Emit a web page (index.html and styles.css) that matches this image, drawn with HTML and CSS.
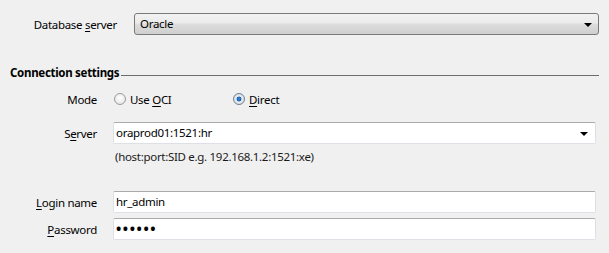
FILE: index.html
```html
<!DOCTYPE html>
<html>
<head>
<meta charset="utf-8">
<link rel="stylesheet" href="styles.css">
</head>
<body>
<div class="page">
  <div class="row-top">
    <div class="label-top">Database <u>s</u>erver</div>
    <div class="combo">
      <span class="combo-text">Oracle</span>
      <span class="arrow"></span>
    </div>
  </div>

  <div class="section-header">
    <span class="section-title">Connection settings</span>
    <span class="section-line"></span>
  </div>

  <div class="form">
    <div class="row mode-row">
      <div class="label">Mode</div>
      <div class="radios">
        <span class="radio-item first"><span class="radio"></span><span>Use <u>O</u>CI</span></span>
        <span class="radio-item"><span class="radio checked"></span><span><u>D</u>irect</span></span>
      </div>
    </div>
    <div class="row server-row">
      <div class="label">S<u>e</u>rver</div>
      <div class="field combo-edit">
        <span class="field-text">oraprod01:1521:hr</span>
        <span class="arrow"></span>
      </div>
    </div>
    <div class="hint-row">
      <div class="hint">(host:port:SID e.g. 192.168.1.2:1521:xe)</div>
    </div>
    <div class="row login-row">
      <div class="label"><u>L</u>ogin name</div>
      <div class="field"><span class="field-text">hr_admin</span></div>
    </div>
    <div class="row password-row">
      <div class="label"><u>P</u>assword</div>
      <div class="field"><span class="field-text dots">&#8226;&#8226;&#8226;&#8226;&#8226;&#8226;</span></div>
    </div>
  </div>
</div>
</body>
</html>
```
FILE: styles.css
```css
html, body {
  margin: 0;
  padding: 0;
  background: #f0f0f0;
}
body {
  font-family: "Noto Sans", "DejaVu Sans", sans-serif;
  font-size: 11.5px;
  letter-spacing: -0.3px;
  color: #000;
  width: 609px;
  height: 253px;
  overflow: hidden;
}
u {
  text-decoration: underline;
  text-underline-offset: 2px;
}
.page {
  padding-top: 13px;
}
.row-top {
  display: flex;
  align-items: center;
  height: 22px;
}
.label-top {
  width: 117px;
  text-align: right;
  margin-right: 17px;
  white-space: nowrap;
}
.combo {
  box-sizing: border-box;
  width: 465px;
  height: 22px;
  border: 1px solid #7a7a7a;
  border-radius: 3px;
  background: linear-gradient(#f2f2f2 0%, #ebebeb 45%, #dddddd 50%, #cfcfcf 100%);
  display: flex;
  align-items: center;
  padding-left: 5px;
  padding-right: 6px;
}
.combo-text, .field-text {
  flex: 1;
  line-height: 16px;
}
.arrow {
  width: 0;
  height: 0;
  border-left: 4px solid transparent;
  border-right: 4px solid transparent;
  border-top: 4px solid #000;
  margin-top: 1px;
}
.section-header {
  display: flex;
  align-items: center;
  margin-top: 29px;
  padding-left: 10px;
  padding-right: 10px;
  height: 16px;
}
.section-title {
  font-weight: bold;
  white-space: nowrap;
  margin-right: 2px;
}
.section-line {
  flex: 1;
  height: 1px;
  background: #6e6e6e;
  margin-top: 7px;
}
.form {
  margin-top: 9px;
}
.row {
  display: flex;
  align-items: center;
}
.label {
  width: 97px;
  text-align: right;
  margin-right: 16px;
  white-space: nowrap;
}
.mode-row {
  height: 20px;
}
.radios {
  display: flex;
  align-items: center;
}
.radio-item {
  display: flex;
  align-items: center;
}
.radio-item.first {
  width: 119px;
}
.radio {
  box-sizing: border-box;
  width: 12px;
  height: 12px;
  border-radius: 50%;
  border: 1px solid #9c9c9c;
  background: radial-gradient(circle at 50% 40%, #ffffff 0%, #ececec 60%, #d8d8d8 100%);
  margin-left: 1px;
  margin-right: 4px;
}
.radio.checked {
  border-color: #6d7f96;
  background: radial-gradient(circle, #2f8ae6 0%, #1c5fb0 32%, #e8ecf0 38%, #d0d6de 100%);
}
.field {
  box-sizing: border-box;
  width: 483px;
  height: 22px;
  background: #fff;
  border: 1px solid #dde1e6;
  border-top-color: #ababab;
  border-radius: 2px;
  display: flex;
  align-items: center;
  padding-left: 2px;
  padding-right: 7px;
}
.server-row {
  margin-top: 13px;
}
.hint-row {
  margin-top: 5px;
  padding-left: 115px;
  height: 16px;
  line-height: 16px;
}
.hint {
  color: #1a1a1a;
}
.login-row {
  margin-top: 26px;
}
.password-row {
  margin-top: 5px;
}
.dots {
  font-size: 14px;
  font-weight: bold;
  letter-spacing: 1.6px;
}
```
